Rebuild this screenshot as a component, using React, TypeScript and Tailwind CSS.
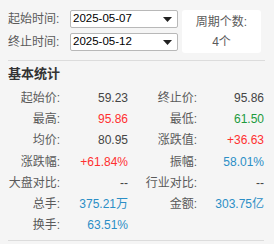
import React from 'react';

type Stat = { label: string; value: string; color?: string };

const rows: [Stat, Stat | null][] = [
  [{ label: '起始价:', value: '59.23' }, { label: '终止价:', value: '95.86' }],
  [{ label: '最高:', value: '95.86', color: 'text-[#ff3030]' }, { label: '最低:', value: '61.50', color: 'text-[#219a3c]' }],
  [{ label: '均价:', value: '80.95' }, { label: '涨跌值:', value: '+36.63', color: 'text-[#ff3030]' }],
  [{ label: '涨跌幅:', value: '+61.84%', color: 'text-[#ff3030]' }, { label: '振幅:', value: '58.01%', color: 'text-[#2b8ec6]' }],
  [{ label: '大盘对比:', value: '--' }, { label: '行业对比:', value: '--' }],
  [{ label: '总手:', value: '375.21万', color: 'text-[#2b8ec6]' }, { label: '金额:', value: '303.75亿', color: 'text-[#2b8ec6]' }],
  [{ label: '换手:', value: '63.51%', color: 'text-[#2b8ec6]' }, null],
];

const DateSelect = ({ value }: { value: string }) => (
  <div className="flex h-[18px] w-[108px] items-center justify-between rounded-[2px] border border-[#b8b8b8] bg-white pl-[2px] pr-[5px] text-[11.5px] text-black">
    <span>{value}</span>
    <svg width="9" height="5" viewBox="0 0 9 5">
      <path d="M0 0H9L4.5 5Z" fill="#222" />
    </svg>
  </div>
);

export default function App() {
  return (
    <div
      className="h-[244px] w-[274px] overflow-hidden bg-[#f5f5f5] px-2 text-[12px] text-[#5a5a5a]"
      style={{ fontFamily: '"Liberation Sans", "Noto Sans CJK SC", sans-serif' }}
    >
      <div className="flex pt-[10px]">
        <div className="flex flex-col gap-[5px]">
          <div className="flex items-center">
            <span className="w-[62px]">起始时间:</span>
            <DateSelect value="2025-05-07" />
          </div>
          <div className="flex items-center">
            <span className="w-[62px]">终止时间:</span>
            <DateSelect value="2025-05-12" />
          </div>
        </div>
        <div className="ml-[4px] flex h-[43px] w-[79px] flex-col items-center justify-center gap-[2px] rounded-[3px] bg-white leading-[18px]">
          <span>周期个数:</span>
          <span>4个</span>
        </div>
      </div>

      <div className="mt-[7px] w-[257px] border-t border-[#dcdcdc]" />
      <div className="h-[26px] pt-[4px] text-[13px] font-bold leading-[18px] text-[#333]">基本统计</div>

      <div className="grid grid-cols-[52px_68px_69px_67px]">
        {rows.map(([a, b], i) => (
          <React.Fragment key={i}>
            <div className="flex h-[21.3px] items-center justify-end">{a.label}</div>
            <div className={`flex h-[21.3px] items-center justify-end ${a.color ?? 'text-[#444]'}`}>{a.value}</div>
            <div className="flex h-[21.3px] items-center justify-end">{b?.label}</div>
            <div className={`flex h-[21.3px] items-center justify-end ${b?.color ?? 'text-[#444]'}`}>{b?.value}</div>
          </React.Fragment>
        ))}
      </div>

      <div className="mt-[4px] w-[256px] border-t border-[#dcdcdc]" />
    </div>
  );
}
